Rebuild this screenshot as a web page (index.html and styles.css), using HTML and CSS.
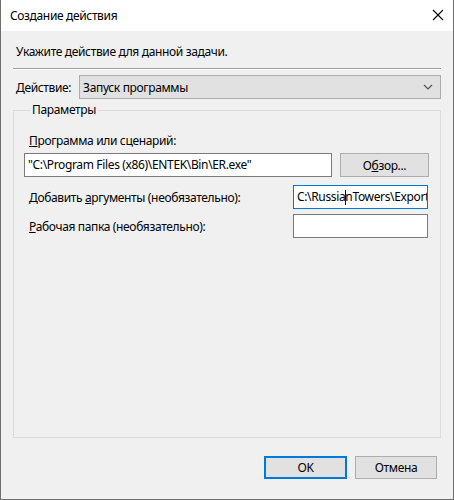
FILE: index.html
```html
<!DOCTYPE html>
<html lang="ru">
<head>
    <meta charset="UTF-8">
    <title>Создание действия</title>
    <link rel="stylesheet" href="styles.css">
</head>
<body>
    <div class="dialog">
        <div class="titlebar">
            <span class="title">Создание действия</span>
            <svg class="close" width="12" height="12" viewBox="0 0 12 12">
                <path d="M1 1 L11 11 M11 1 L1 11" stroke="#000" stroke-width="1.1" fill="none"/>
            </svg>
        </div>

        <div class="content">
            <p class="hint">Укажите действие для данной задачи.</p>
            <div class="separator"></div>

            <div class="action-row">
                <span class="label"><u>Д</u>ействие:</span>
                <div class="combo">
                    <span>Запуск программы</span>
                    <svg width="10" height="6" viewBox="0 0 10 6">
                        <path d="M1 1 L5 5 L9 1" stroke="#555" stroke-width="1.2" fill="none"/>
                    </svg>
                </div>
            </div>

            <fieldset class="params">
                <legend>Параметры</legend>

                <div class="field-label"><u>П</u>рограмма или сценарий:</div>
                <div class="program-row">
                    <div class="textbox wide">"C:\Program Files (x86)\ENTEK\Bin\ER.exe"</div>
                    <div class="btn browse">О<u>б</u>зор...</div>
                </div>

                <div class="grid-row">
                    <span class="row-label">Добавить <u>а</u>ргументы (необязательно):</span>
                    <div class="textbox small focused">C:\Russia<span class="caret"></span>nTowers\Export</div>
                </div>
                <div class="grid-row">
                    <span class="row-label"><u>Р</u>абочая папка (необязательно):</span>
                    <div class="textbox small"></div>
                </div>
            </fieldset>
        </div>

        <div class="footer">
            <div class="btn default">OK</div>
            <div class="btn">Отмена</div>
        </div>
    </div>
</body>
</html>
```

FILE: styles.css
```css
html, body {
    margin: 0;
    padding: 0;
}

body {
    font-family: "Noto Sans", sans-serif;
    font-size: 12px;
    letter-spacing: -0.35px;
    color: #000;
    background: #f0f0f0;
}

.dialog {
    width: 454px;
    height: 500px;
    box-sizing: border-box;
    background: #f0f0f0;
    border-left: 1px solid #6e6e6e;
    border-right: 1px solid #6e6e6e;
    border-bottom: 1px solid #6e6e6e;
    display: flex;
    flex-direction: column;
}

.titlebar {
    height: 31px;
    flex-shrink: 0;
    background: #fff;
    display: flex;
    align-items: center;
    justify-content: space-between;
    padding: 0 9px 0 9px;
}

.title {
    font-size: 12px;
}

.close {
    display: block;
    margin-top: -1px;
}

.content {
    padding: 0 12px 0 12px;
    flex: 1;
    display: flex;
    flex-direction: column;
}

.hint {
    margin: 13px 0 0 3px;
    line-height: 16px;
}

.separator {
    margin-top: 8px;
    width: 428px;
    height: 1px;
    background: #a0a0a0;
    border-bottom: 1px solid #fff;
}

.action-row {
    display: flex;
    align-items: center;
    margin-top: 5px;
    height: 24px;
}

.action-row .label {
    width: 64px;
    padding-left: 3px;
}

.combo {
    width: 367px;
    height: 24px;
    box-sizing: border-box;
    background: #e1e1e1;
    border: 1px solid #adadad;
    display: flex;
    align-items: center;
    justify-content: space-between;
    padding: 0 7px 0 3px;
}

.combo svg {
    display: block;
}

.params {
    margin: 3px 0 0 0;
    width: 428px;
    height: 336px;
    box-sizing: border-box;
    border: 1px solid #dcdcdc;
    padding: 15px 0 0 10px;
}

.params legend {
    padding: 0 2px;
    margin-left: 6px;
    line-height: 16px;
}

.field-label {
    padding-left: 5px;
    line-height: 16px;
}

.program-row {
    display: flex;
    align-items: center;
    gap: 8px;
    margin-top: 4px;
}

.textbox {
    height: 24px;
    box-sizing: border-box;
    background: #fff;
    border: 1px solid #7a7a7a;
    padding: 0 3px;
    line-height: 22px;
    white-space: nowrap;
    overflow: hidden;
}

.textbox.wide {
    width: 308px;
}

.textbox.small {
    width: 135px;
}

.textbox.focused {
    border-color: #0078d7;
}

.caret {
    display: inline-block;
    width: 0;
    height: 15px;
    border-left: 1px solid #000;
    vertical-align: middle;
    margin-right: -1px;
}

.btn {
    height: 24px;
    box-sizing: border-box;
    background: #e1e1e1;
    border: 1px solid #adadad;
    display: flex;
    align-items: center;
    justify-content: center;
}

.browse {
    width: 89px;
}

.grid-row {
    display: grid;
    grid-template-columns: 269px 135px;
    align-items: center;
    margin-top: 8px;
}

.grid-row + .grid-row {
    margin-top: 5px;
}

.row-label {
    padding-left: 5px;
}

.footer {
    display: flex;
    justify-content: flex-end;
    gap: 8px;
    padding: 0 16px 20px 0;
}

.footer .btn {
    width: 82px;
    height: 23px;
}

.footer .btn.default {
    width: 83px;
    border: 2px solid #0078d7;
}
```
